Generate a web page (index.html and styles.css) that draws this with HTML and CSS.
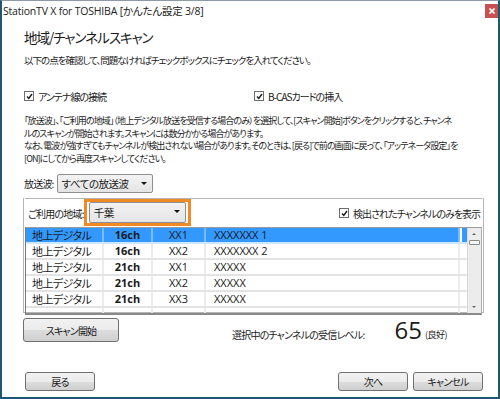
FILE: index.html
```html
<!DOCTYPE html>
<html><head>
<title>StationTV X for TOSHIBA [かんたん設定 3/8]</title>
<link rel="stylesheet" href="styles.css">
<meta http-equiv="content-type" content="text/html; charset=UTF-8">
</head>
<body>
<div class="window">

<div class="titlebar">
  <span class="caption">StationTV X for TOSHIBA [かんたん設定 3/8]</span>
  <span class="close"><svg width="6" height="6" viewBox="0 0 6 6"><path d="M0.5 0.5L5.5 5.5M5.5 0.5L0.5 5.5" stroke="#fff" stroke-width="1.6"/></svg></span>
</div>

<div class="content">
  <h1>地域/チャンネルスキャン</h1>
  <p class="lead">以下の点を確認して、問題なければチェックボックスにチェックを入れてください。</p>

  <div class="checks">
    <label class="check"><span class="box"><svg width="7" height="7" viewBox="0 0 7 7"><path d="M1 3.5L2.8 5.5L6 1" fill="none" stroke="#1a1a1a" stroke-width="1.4"/></svg></span>アンテナ線の接続</label>
    <label class="check"><span class="box"><svg width="7" height="7" viewBox="0 0 7 7"><path d="M1 3.5L2.8 5.5L6 1" fill="none" stroke="#1a1a1a" stroke-width="1.4"/></svg></span>B-CASカードの挿入</label>
  </div>

  <p class="notice">「放送波」、「ご利用の地域」（地上デジタル放送を受信する場合のみ）を選択して、[スキャン開始]ボタンをクリックすると、チャンネ<br>
  ルのスキャンが開始されます。スキャンには数分かかる場合があります。<br>
  なお、電波が強すぎてもチャンネルが検出されない場合があります。そのときは、[戻る]で前の画面に戻って、「アッテネータ設定」を<br>
  [ON]にしてから再度スキャンしてください。</p>

  <div class="band">
    <span class="label">放送波:</span>
    <span class="select wide">すべての放送波<i class="arrow"></i></span>
  </div>

  <div class="group">
    <div class="region">
      <span class="label">ご利用の地域:</span>
      <span class="focus"><span class="select">千葉<i class="arrow"></i></span></span>
      <label class="check only"><span class="box"><svg width="7" height="7" viewBox="0 0 7 7"><path d="M1 3.5L2.8 5.5L6 1" fill="none" stroke="#1a1a1a" stroke-width="1.4"/></svg></span>検出されたチャンネルのみを表示</label>
    </div>

    <div class="list">
      <table class="channels">
        <tr class="sel"><td class="kind">地上デジタル</td><td class="ch">16ch</td><td class="tp">XX1</td><td class="name">XXXXXXX 1</td><td class="pad"></td></tr>
        <tr><td class="kind">地上デジタル</td><td class="ch">16ch</td><td class="tp">XX2</td><td class="name">XXXXXXX 2</td><td class="pad"></td></tr>
        <tr><td class="kind">地上デジタル</td><td class="ch">21ch</td><td class="tp">XX1</td><td class="name">XXXXX</td><td class="pad"></td></tr>
        <tr><td class="kind">地上デジタル</td><td class="ch">21ch</td><td class="tp">XX2</td><td class="name">XXXXX</td><td class="pad"></td></tr>
        <tr><td class="kind">地上デジタル</td><td class="ch">21ch</td><td class="tp">XX3</td><td class="name">XXXXX</td><td class="pad"></td></tr>
        <tr class="cut"><td></td><td></td><td></td><td></td><td class="pad"></td></tr>
      </table>
      <div class="scrollbar">
        <span class="up"></span>
        <span class="thumb"></span>
        <span class="down"></span>
      </div>
    </div>
  </div>

  <div class="scanrow">
    <span class="button scan">スキャン開始</span>
    <span class="level">選択中のチャンネルの受信レベル:</span>
    <span class="value">65</span>
    <span class="grade">(良好)</span>
  </div>
</div>

<div class="footer">
  <span class="button back">戻る</span>
  <span class="spacer"></span>
  <span class="button">次へ</span>
  <span class="button">キャンセル</span>
</div>

</div>
</body></html>
```

FILE: styles.css
```css
html, body { margin: 0; padding: 0; }

body {
  font-family: "Noto Sans CJK JP", sans-serif;
  font-feature-settings: "palt";
  font-size: 10px;
  color: #1a1a1a;
  background: #fff;
}

.window {
  width: 500px;
  height: 399px;
  box-sizing: border-box;
  border-top: 1px solid #8b9aa6;
  border-left: 2px solid #1d5a72;
  border-right: 2px solid #1d5a72;
  border-bottom: 2px solid #1d5a72;
  display: flex;
  flex-direction: column;
  overflow: hidden;
}

.titlebar {
  height: 19px;
  display: flex;
  align-items: center;
  justify-content: space-between;
  padding-left: 1px;
}
.caption {
  font-family: "Open Sans", "Noto Sans CJK JP", sans-serif;
  font-size: 10.5px;
  letter-spacing: -0.2px;
  color: #222;
}
.close {
  width: 13px;
  height: 14px;
  margin-top: 1px;
  background: #c75050;
  display: flex;
  align-items: center;
  justify-content: center;
}

.content { flex: 1; padding-left: 22px; }

h1 {
  font-size: 13.5px;
  font-weight: normal;
  line-height: 20px;
  margin: 7px 0 0 0;
  letter-spacing: -1px;
}

.lead { font-size: 9.5px; line-height: 14px; margin: 6px 0 0 0; letter-spacing: -1px; }

.checks { display: flex; height: 16px; margin-top: 21px; }
.check { display: flex; align-items: center; white-space: nowrap; letter-spacing: -1px; font-size: 10px; }
.checks .check { width: 230px; }
.box {
  width: 8px;
  height: 8px;
  border: 1px solid #6e6e6e;
  background: #fff;
  margin-right: 4px;
  display: flex;
  align-items: center;
  justify-content: center;
}

.notice {
  line-height: 12.5px;
  margin: 11px 0 0 0;
  letter-spacing: -0.9px;
  white-space: nowrap;
  font-size: 9px;
}

.band { display: flex; align-items: center; height: 19px; margin-top: 9px; }
.label { font-size: 10px; letter-spacing: -0.8px; margin-right: 3px; }

.select {
  position: relative;
  box-sizing: border-box;
  height: 19px;
  border: 1px solid #8f8f8f;
  border-radius: 2px;
  background: linear-gradient(#f3f3f3, #e4e4e4);
  font-size: 10.5px;
  letter-spacing: -0.5px;
  display: flex;
  align-items: center;
  padding-left: 4px;
}
.wide { width: 96px; }
.arrow {
  position: absolute;
  right: 5px;
  top: 7px;
  border-left: 3px solid transparent;
  border-right: 3px solid transparent;
  border-top: 3px solid #111;
}

.group {
  margin: 5px 0 0 -1px;
  width: 461px;
  height: 115px;
  box-sizing: border-box;
  border: 1px solid #b5b5b5;
  border-top: 0;
  padding: 0 1px;
}

.region { display: flex; align-items: center; height: 28px; padding-left: 3px; border-top: 1px solid #b5b5b5; }
.region .label { margin-right: 0; }
.focus {
  border: 3px solid #f08a24;
  padding: 0 2px;
  margin-left: 0;
  height: 21px;
  display: flex;
  align-items: center;
  margin-top: -1px;
}
.focus .select { width: 97px; height: 21px; }
.only { margin-left: auto; margin-right: 2px; }

.list {
  display: flex;
  height: 85px;
  border-left: 1px solid #7a7a7a;
  border-top: 1px solid #9a9a9a;
  border-bottom: 2px solid #8a8a8a;
  border-right: 1px solid #b0b0b0;
  overflow: hidden;
}

.channels {
  border-collapse: collapse;
  table-layout: fixed;
  width: 443px;
  font-size: 11px;
  line-height: 14px;
  align-self: flex-start;
}
.channels td {
  height: 14px;
  padding: 0;
  border-bottom: 2px solid #e3e3e3;
  border-right: 2px solid #ececec;
  white-space: nowrap;
  overflow: hidden;
}
.kind { width: 70px; padding-left: 6px !important; letter-spacing: -0.6px; }
.ch { width: 47px; text-align: center; font-weight: bold; font-family: "Open Sans", sans-serif; }
.tp { width: 51px; text-align: center; font-family: "Open Sans", sans-serif; }
.name { width: 244px; padding-left: 8px !important; font-family: "Open Sans", sans-serif; }
.pad { border-right: 0 !important; }
.sel td { background: #3399ff; border-right-color: #7bbcff; border-bottom-color: #cfe6ff; }
.sel .pad { background: linear-gradient(90deg, #fff 2px, #3399ff 2px, #3399ff 7px, #fff 7px); }
.cut td { border-bottom: 0; }

.scrollbar {
  position: relative;
  width: 13px;
  margin-left: auto;
  background: #ececec;
  border-left: 1px solid #dadada;
}
.up, .down {
  position: absolute;
  left: 4px;
  border-left: 2px solid transparent;
  border-right: 2px solid transparent;
}
.up { top: 5px; border-bottom: 2px solid #666; }
.down { bottom: 5px; border-top: 2px solid #666; }
.thumb {
  position: absolute;
  left: 1px;
  top: 12px;
  width: 9px;
  height: 3px;
  border: 1px solid #8a8a8a;
  border-radius: 1px;
  background: #f4f4f4;
}

.button {
  box-sizing: border-box;
  display: flex;
  align-items: center;
  justify-content: center;
  border: 1px solid #707070;
  border-radius: 3px;
  background: linear-gradient(#f2f2f2 0%, #ebebeb 50%, #dddddd 51%, #cfcfcf 100%);
  letter-spacing: -0.8px;
  font-size: 10px;
}

.scanrow { display: flex; align-items: center; height: 24px; margin-top: 5px; margin-left: -1px; }
.scan { width: 96px; height: 24px; }
.level { margin-left: 113px; margin-top: 8px; font-size: 10px; letter-spacing: -0.8px; }
.value { margin-left: 30px; font-family: "Open Sans", sans-serif; font-size: 24px; line-height: 24px; }
.grade { margin-left: 3px; margin-top: 9px; font-size: 9px; letter-spacing: -0.5px; }

.footer {
  display: flex;
  align-items: center;
  height: 19px;
  padding: 0 15px 6px 23px;
  gap: 5px;
}
.footer .button { width: 70px; height: 19px; }
.spacer { flex: 1; }
```
